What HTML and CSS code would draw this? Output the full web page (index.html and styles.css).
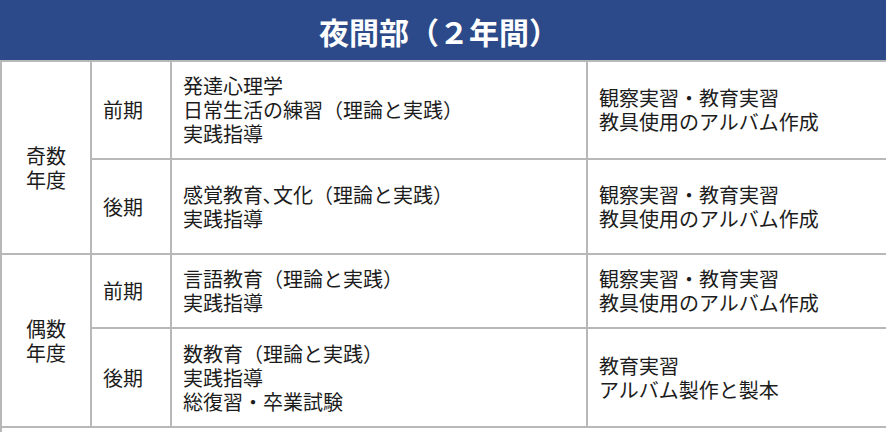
FILE: index.html
```html
<!DOCTYPE html>
<html lang="ja">
<head>
<meta charset="utf-8">
<title>夜間部（２年間）</title>
<link rel="stylesheet" href="styles.css">
</head>
<body>
<table class="curriculum">
  <colgroup>
    <col class="c-year">
    <col class="c-term">
    <col class="c-subject">
    <col class="c-practice">
  </colgroup>
  <thead>
    <tr><th colspan="4" class="title">夜間部（２年間）</th></tr>
  </thead>
  <tbody>
    <tr class="r1">
      <td rowspan="2" class="year year-odd">奇数<br>年度</td>
      <td class="term">前期</td>
      <td>発達心理学<br>日常生活の練習（理論と実践）<br>実践指導</td>
      <td>観察実習・教育実習<br>教具使用のアルバム作成</td>
    </tr>
    <tr class="r2">
      <td class="term">後期</td>
      <td>感覚教育､文化（理論と実践）<br>実践指導</td>
      <td>観察実習・教育実習<br>教具使用のアルバム作成</td>
    </tr>
    <tr class="r3">
      <td rowspan="2" class="year">偶数<br>年度</td>
      <td class="term">前期</td>
      <td>言語教育（理論と実践）<br>実践指導</td>
      <td>観察実習・教育実習<br>教具使用のアルバム作成</td>
    </tr>
    <tr class="r4">
      <td class="term">後期</td>
      <td>数教育（理論と実践）<br>実践指導<br>総復習・卒業試験</td>
      <td>教育実習<br>アルバム製作と製本</td>
    </tr>
    <tr class="r5">
      <td colspan="4" class="next"></td>
    </tr>
  </tbody>
</table>
</body>
</html>
```
FILE: styles.css
```css
html, body {
  margin: 0;
  padding: 0;
  background: #ffffff;
}

body {
  font-family: "Noto Sans CJK JP", "Noto Sans", sans-serif;
  color: #1c1c1c;
}

.curriculum {
  width: 886px;
  border-collapse: collapse;
  table-layout: fixed;
}

.c-year { width: 90px; }
.c-term { width: 80px; }
.c-subject { width: 416px; }
.c-practice { width: 300px; }

.title {
  height: 58px;
  padding: 0 10px 0 0;
  background: #2c4a89;
  color: #ffffff;
  font-size: 30px;
  font-weight: 700;
  line-height: 36px;
  text-align: center;
  border: 2px solid #2c4a89;
  border-bottom: 2px solid #b8b8b8;
}

.curriculum td {
  border: 2px solid #b8b8b8;
  padding: 12px 12px 12px 11px;
  font-size: 20px;
  line-height: 24px;
  vertical-align: middle;
  text-align: left;
}

.curriculum td.year {
  text-align: center;
  padding: 0 6px;
}

.curriculum td.year-odd {
  padding-top: 20px;
}

.r2 td {
  height: 69px;
}

.r4 td {
  padding-top: 13px;
}

.curriculum td.next {
  height: 20px;
  padding: 0;
}
```
